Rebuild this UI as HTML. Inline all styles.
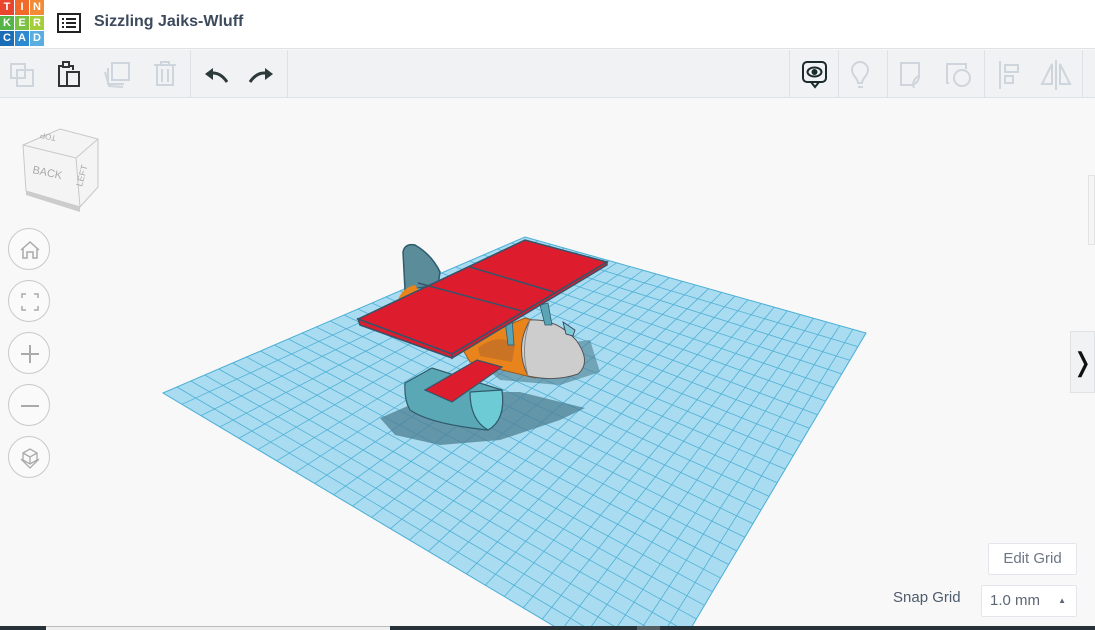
<!DOCTYPE html>
<html><head><meta charset="utf-8"><style>
*{margin:0;padding:0;box-sizing:border-box}
body{width:1095px;height:630px;overflow:hidden;background:#f8f8f8;font-family:"Liberation Sans",sans-serif;position:relative}
.top{position:absolute;left:0;top:0;width:1095px;height:49px;background:#fff;border-bottom:1px solid #dfe2e5}
.logo{position:absolute;left:0;top:0;width:44px;height:46px;display:grid;grid-template-columns:repeat(3,14px);grid-gap:1px}
.logo span{color:#fff;font-weight:bold;font-size:11px;text-align:center;line-height:14px}
.title{position:absolute;left:94px;top:13px;font-size:16px;color:#3c4a5c;font-weight:bold}
.tb{position:absolute;left:0;top:50px;width:1095px;height:48px;background:#f1f2f4;border-bottom:1px solid #dfe2e5}
.sep{position:absolute;top:0;width:1px;height:47px;background:#dfe2e5}
.ctl{position:absolute;left:8px;width:42px;height:42px;border:1px solid #c9c9c9;border-radius:50%;background:#fafafa}
</style></head><body>
<div class="top">
 <div class="logo">
  <span style="background:#e8452c">T</span><span style="background:#f26a2a">I</span><span style="background:#f38b36">N</span>
  <span style="background:#55b447">K</span><span style="background:#7bc143">E</span><span style="background:#a4cd39">R</span>
  <span style="background:#1b6db5">C</span><span style="background:#2e8ad0">A</span><span style="background:#59ade0">D</span>
 </div>
 <svg style="position:absolute;left:57px;top:13px" width="24" height="20"><rect x="1" y="1" width="22" height="18" fill="none" stroke="#222" stroke-width="2"/><rect x="5" y="5" width="2" height="2" fill="#222"/><rect x="9" y="5" width="10" height="2" fill="#222"/><rect x="5" y="9" width="2" height="2" fill="#222"/><rect x="9" y="9" width="10" height="2" fill="#222"/><rect x="5" y="13" width="2" height="2" fill="#222"/><rect x="9" y="13" width="10" height="2" fill="#222"/></svg>
 <div class="title">Sizzling Jaiks-Wluff</div>
</div>
<div class="tb">
 <svg style="position:absolute;left:0;top:0" width="1095" height="48" fill="none" stroke-width="2">
  <g stroke="#cfd5dc"><rect x="11" y="14" width="14" height="14"/><rect x="17" y="20" width="16" height="16"/></g>
  <g stroke="#333"><path d="M62 16h-3v20h8M70 16h3v4"/><rect x="63" y="12" width="6" height="5"/><rect x="67" y="22" width="12" height="14"/></g>
  <g stroke="#cfd5dc"><rect x="112" y="13" width="17" height="17"/><path d="M108 18v16h16"/><path d="M105 22l4 14 14 1"/></g>
  <g stroke="#cfd5dc"><path d="M154 15h22M161 15v-3h8v3M157 15v20h16v-20M162 19v13M168 19v13"/></g>
  <path d="M207 24q12-4 20 8" stroke="#2d3a3a" stroke-width="3"/><path d="M205 24l8-6v12z" fill="#2d3a3a"/>
  <path d="M270 24q-12-4-20 8" stroke="#2d3a3a" stroke-width="3"/><path d="M273 24l-8-6v12z" fill="#2d3a3a"/>
  <g stroke="#1b2b2b"><rect x="803" y="12" width="23" height="20" rx="4"/><path d="M811 32l4 5 4-5"/><ellipse cx="814.5" cy="22" rx="7" ry="4.5"/><circle cx="814.5" cy="22" r="2" fill="#1b2b2b"/></g>
  <g stroke="#cfd5dc"><path d="M858 33c0-5-6-7-6-13a8 8 0 0 1 16 0c0 6-6 8-6 13zM858 37h5"/></g>
  <g stroke="#cfd5dc"><path d="M901 13h18v12a9 9 0 0 1-9 10h-9z" stroke-width="2"/><path d="M919 26a9 9 0 0 0-5 12"/></g>
  <g stroke="#cfd5dc"><path d="M949 33h-2v-19h19v5"/><circle cx="962" cy="28" r="8"/></g>
  <g stroke="#cfd5dc"><path d="M1000 11v28"/><rect x="1005" y="15" width="13" height="7"/><rect x="1005" y="26" width="8" height="7"/></g>
  <g stroke="#cfd5dc"><path d="M1056 10v30M1052 14l-10 20h10zM1060 14l10 20h-10z"/></g>
 </svg>
 <div class="sep" style="left:190px"></div><div class="sep" style="left:287px"></div>
 <div class="sep" style="left:789px"></div><div class="sep" style="left:838px"></div><div class="sep" style="left:887px"></div>
 <div class="sep" style="left:984px"></div><div class="sep" style="left:1082px"></div>
</div>
<svg id="scene" style="position:absolute;left:0;top:0" width="1095" height="630">
 <defs><clipPath id="cp"><rect x="0" y="99" width="1095" height="527"/></clipPath></defs>
 <g clip-path="url(#cp)">
  <polygon points="163,393 525,237 866,333 656,687" fill="#a9dcf0" stroke="#5ab8dc" stroke-width="1"/>
  <g id="grid"></g>
  <!-- shadows -->
  <path d="M380 418 L440 392 L520 392 L585 408 L560 420 L500 440 L440 445 L395 435 Z" fill="#4e7f93" opacity=".75"/>
  <path d="M470 355 L590 340 L600 372 L560 385 L500 380Z" fill="#4e7f93" opacity=".6"/>
  <!-- tail -->
  <path d="M405 290 L403 252 Q405 243 415 245 Q432 255 440 272 L438 285 Z" fill="#5a8c9a" stroke="#2f5b6b" stroke-width="1.5"/>
  <path d="M398 300 Q402 288 415 285 L425 300Z" fill="#e9841c"/>
  <!-- fuselage -->
  <path d="M460 345 L525 318 L540 322 L535 378 L470 362Z" fill="#e9841c" stroke="#9a5a1a" stroke-width="1"/>
  <path d="M478 348 Q500 332 515 345 L512 362 L480 356Z" fill="#b8672a" opacity=".6"/>
  <!-- nose -->
  <path d="M530 320 Q556 318 576 340 Q592 362 578 374 Q555 382 528 376 Q514 348 530 320Z" fill="#cdcdcd" stroke="#555" stroke-width="1"/>
  <path d="M530 320 Q520 348 528 376" fill="none" stroke="#888" stroke-width="1"/>
  <path d="M563 322 L575 330 L573 336 L566 334Z" fill="#7ec9d6" stroke="#335" stroke-width=".8"/>
  <!-- struts -->
  <path d="M505 320 L512 318 L514 345 L508 345Z M540 305 L548 303 L552 325 L545 325Z" fill="#5aa4b5" stroke="#2f5b6b" stroke-width=".8"/>
  <!-- wing -->
  <g fill="#dd1c2e" stroke="#35546a" stroke-width="1.5">
   <polygon points="358,319 525,240 607,262 452,354"/>
   <line x1="418" y1="283" x2="522" y2="311"/>
   <line x1="470" y1="267" x2="554" y2="292"/>
   <polygon points="358,319 452,354 452,358 360,325"/>
   <polygon points="452,354 607,262 607,265 452,358"/>
  </g>
  <!-- float -->
  <path d="M405 383 L432 368 L502 390 L502 396 Q505 420 488 430 Q430 424 410 410 Q404 400 405 383 Z" fill="#5aa8b5" stroke="#2f5b6b" stroke-width="1.2"/>
  <path d="M470 392 L502 390 Q506 420 488 430 Q470 420 470 392Z" fill="#6dcbd6" stroke="#2f5b6b" stroke-width="1.2"/>
  <polygon points="425,390 477,360 502,367 452,402" fill="#dd1c2e" stroke="#35546a" stroke-width="1.2"/>
 </g>
</svg>
<div style="position:absolute;left:20px;top:125px;width:80px;height:90px">
 <svg width="80" height="90"><path d="M3 20 L40 4 L78 14 L78 62 L60 82 L6 66Z" fill="#f4f4f4" stroke="#c8c8c8"/><path d="M3 20 L56 33 L78 14 M56 33 L60 82" fill="none" stroke="#c8c8c8"/><path d="M6 66 L6 70 L60 87 L60 82Z" fill="#ccc"/>
 <text x="12" y="48" font-size="11" fill="#aaa" transform="rotate(12 12 48)">BACK</text><text x="62" y="62" font-size="9" fill="#aaa" transform="rotate(-75 62 62)">LEFT</text><text x="48" y="16" font-size="8" fill="#aaa" transform="rotate(192 42 14)">TOP</text></svg>
</div>
<div class="ctl" style="top:228px"><svg width="42" height="42" fill="none" stroke="#aaa" stroke-width="1.5"><path d="M12 21l9-8 9 8M14 19v10h4v-6h6v6h4v-10"/></svg></div>
<div class="ctl" style="top:280px"><svg width="42" height="42" fill="none" stroke="#aaa" stroke-width="1.5"><path d="M13 17v-4h4M25 13h4v4M29 25v4h-4M17 29h-4v-4"/></svg></div>
<div class="ctl" style="top:332px"><svg width="42" height="42" fill="none" stroke="#aaa" stroke-width="2"><path d="M12 21h18M21 12v18"/></svg></div>
<div class="ctl" style="top:384px"><svg width="42" height="42" fill="none" stroke="#aaa" stroke-width="2"><path d="M12 21h18"/></svg></div>
<div class="ctl" style="top:436px"><svg width="42" height="42" fill="none" stroke="#aaa" stroke-width="1.3"><path d="M14 16l7-4 7 4v7l-7 4-7-4zM14 16l7 4 7-4M21 20v7M12 22l9 9 9-9"/></svg></div>
<div style="position:absolute;left:1088px;top:175px;width:7px;height:70px;border:1px solid #e3e3e3;background:#f5f5f5"></div>
<div style="position:absolute;left:1070px;top:331px;width:25px;height:62px;background:#f1f2f4;border:1px solid #dfe2e5;font-size:26px;color:#111;text-align:center;line-height:60px">&#x276D;</div>
<div style="position:absolute;left:988px;top:543px;width:89px;height:32px;border:1px solid #e3e6ea;background:#fff;border-radius:2px;color:#6b7785;font-size:15px;text-align:center;line-height:30px">Edit Grid</div>
<div style="position:absolute;left:893px;top:589px;font-size:15px;color:#4e5c6c">Snap Grid</div>
<div style="position:absolute;left:981px;top:585px;width:96px;height:32px;border:1px solid #e3e6ea;background:#fff;border-radius:2px;color:#5b6672;font-size:15px;line-height:30px;padding-left:8px">1.0 mm<span style="position:absolute;right:10px;top:0;font-size:8px">&#9650;</span></div>
<div style="position:absolute;left:0;top:626px;width:1095px;height:4px;background:#263238"></div>
<div style="position:absolute;left:46px;top:626px;width:344px;height:4px;background:#eee;border-top:1px solid #bbb"></div>
<div style="position:absolute;left:637px;top:626px;width:23px;height:4px;background:#555f63"></div>
<script>
(function(){
var L=[163,393],T=[525,237],R=[866,333],B=[656,687];
function P(u,v){var a=[L[0]+(T[0]-L[0])*u,L[1]+(T[1]-L[1])*u],b=[B[0]+(R[0]-B[0])*u,B[1]+(R[1]-B[1])*u];return [a[0]+(b[0]-a[0])*v,a[1]+(b[1]-a[1])*v];}
var g=document.getElementById('grid'),s='',N=26;
for(var i=0;i<=N;i++){var t=i/N,st='stroke="#4fb0d6" stroke-width="0.8"';
var p=P(t,0),q=P(t,1);s+='<line x1="'+p[0]+'" y1="'+p[1]+'" x2="'+q[0]+'" y2="'+q[1]+'" '+st+'/>';
p=P(0,t);q=P(1,t);s+='<line x1="'+p[0]+'" y1="'+p[1]+'" x2="'+q[0]+'" y2="'+q[1]+'" '+st+'/>';}
g.innerHTML=s;})();
</script>
</body></html>
